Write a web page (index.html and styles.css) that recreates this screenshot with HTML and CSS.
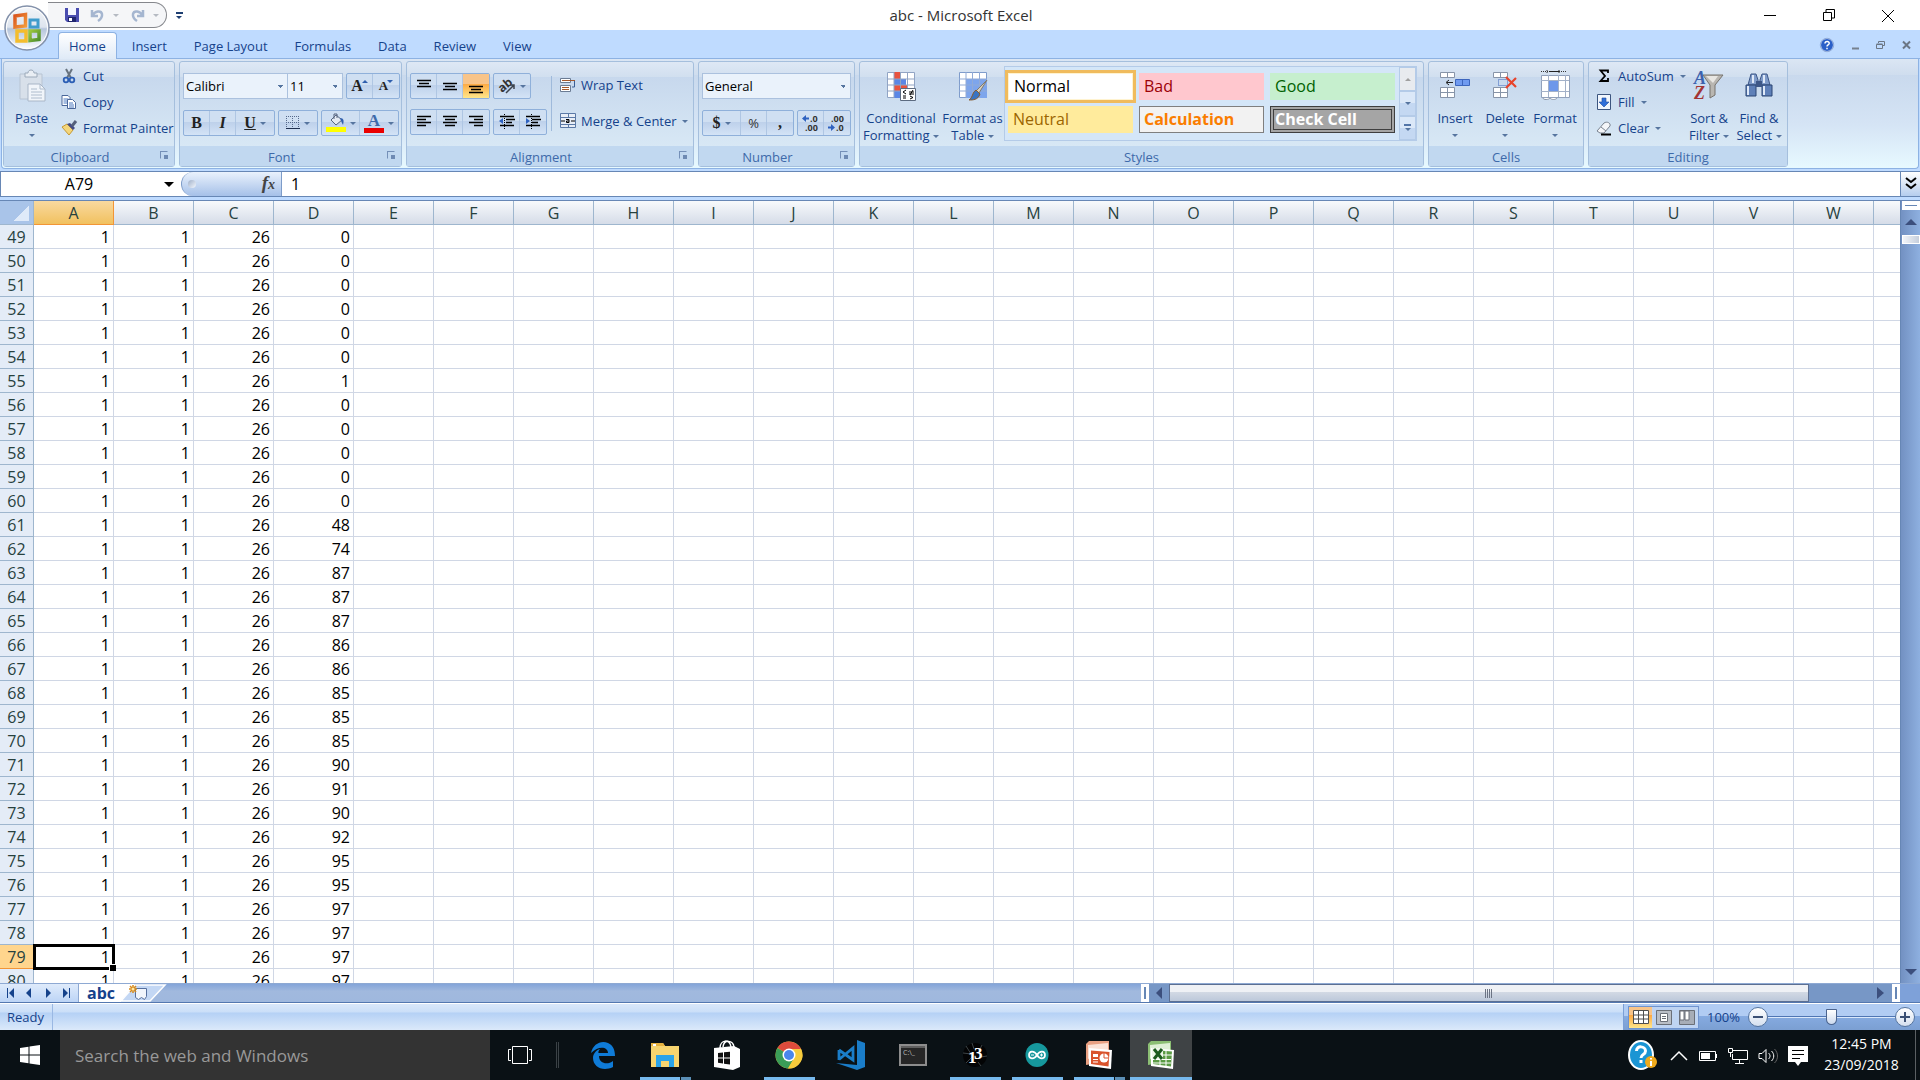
FILE: index.html
```html
<!DOCTYPE html>
<html lang="en">
<head>
    <meta charset="UTF-8">
    <meta name="viewport" content="width=device-width, initial-scale=1.0">
    <title>abc - Microsoft Excel</title>
    <link rel="stylesheet" href="styles.css">
</head>
<body>
    <!-- Title bar -->
    <header class="title-bar">
        <button class="office-button" aria-label="Office Button">
            <svg width="46" height="46" viewBox="0 0 46 46">
                <defs>
                    <linearGradient id="orb" x1="0" y1="0" x2="0" y2="1">
                        <stop offset="0" stop-color="#f4f6f9"/><stop offset=".48" stop-color="#dde4ee"/>
                        <stop offset=".52" stop-color="#b5c5dc"/><stop offset="1" stop-color="#fff"/>
                    </linearGradient>
                    <linearGradient id="red" x1="0" y1="0" x2="1" y2="1"><stop offset="0" stop-color="#d9541e"/><stop offset="1" stop-color="#f39b3a"/></linearGradient>
                    <linearGradient id="green" x1="0" y1="0" x2="1" y2="1"><stop offset="0" stop-color="#9cc63c"/><stop offset="1" stop-color="#4d8f2c"/></linearGradient>
                </defs>
                <circle cx="23" cy="23" r="22" fill="url(#orb)" stroke="#8492ab" stroke-width="1.5"/>
                <circle cx="23" cy="23" r="20.5" fill="none" stroke="#fff"/>
                <path d="M11 11l10.500-1.500v11.500l-10.500 1z" fill="none" stroke="url(#red)" stroke-width="3.500"/>
                <path d="M26 15h8v7h-8z" fill="none" stroke="#3f9ccc" stroke-width="3"/>
                <path d="M13 26h9v10h-9z" fill="none" stroke="#f4bd2c" stroke-width="3.500"/>
                <path d="M26 26h9v8.500l-9 1z" fill="none" stroke="url(#green)" stroke-width="3.500"/>
            </svg>
        </button>
        <div class="quick-access">
            <button aria-label="Save"><svg width="14" height="14" viewBox="0 0 14 14"><path d="M0 0h14v14H2l-2-2z" fill="#4a4db0"/><path d="M3 0h8v7H3z" fill="#f4f6ff"/><path d="M3 9h8v5H3z" fill="#20266f"/><path d="M4 10h3v3H4z" fill="#fff"/></svg></button>
            <button aria-label="Undo"><svg width="13" height="13" viewBox="0 0 13 13"><path d="M1 1v6h6M1.500 6.500C4 2 10 1 11 5c.5 3-1 5-4 7" fill="none" stroke="#a5b6d0" stroke-width="2.500"/></svg></button>
            <span class="arrow grey"></span>
            <button aria-label="Redo"><svg width="13" height="13" viewBox="0 0 13 13"><path d="M12 1v6H6M11.500 6.500C9 2 3 1 2 5c-.5 3 1 5 4 7" fill="none" stroke="#a5b6d0" stroke-width="2.500"/></svg></button>
            <span class="arrow grey"></span>
        </div>
        <button class="customize" aria-label="Customize Quick Access Toolbar"><span class="bar"></span><span class="arrow navy"></span></button>
        <h1>abc - Microsoft Excel</h1>
        <div class="window-buttons">
            <button aria-label="Minimize"><svg width="14" height="14"><path d="M1 7.500h12" stroke="#000"/></svg></button>
            <button aria-label="Restore"><svg width="14" height="14" fill="none" stroke="#000"><path d="M1.500 4.500h8v8h-8zM4 4V1.500h8.500V10H10"/></svg></button>
            <button aria-label="Close"><svg width="14" height="14" stroke="#000"><path d="M1 2l12 12M13 2L1 14"/></svg></button>
        </div>
    </header>

    <!-- Ribbon tabs -->
    <nav class="tabs">
        <a href="#" class="tab active">Home</a>
        <a href="#" class="tab">Insert</a>
        <a href="#" class="tab">Page Layout</a>
        <a href="#" class="tab">Formulas</a>
        <a href="#" class="tab">Data</a>
        <a href="#" class="tab">Review</a>
        <a href="#" class="tab">View</a>
        <div class="doc-buttons">
            <button aria-label="Help"><svg width="14" height="14"><circle cx="7" cy="7" r="6.500" fill="#2a5fc8" stroke="#fff"/><circle cx="7" cy="7" r="6.700" fill="none" stroke="#4a74bd" stroke-width=".6"/><path d="M5 5.500c0-3 4.500-2.500 4.200 0C9 7 7 6.800 7 8.500M7 9.800v1.500" fill="none" stroke="#fff" stroke-width="1.500"/></svg></button>
            <button aria-label="Minimize workbook"><svg width="10" height="10"><path d="M2 8.500h7" stroke="#76818f" stroke-width="2"/></svg></button>
            <button aria-label="Restore workbook"><svg width="10" height="10" fill="none" stroke="#6b7685"><path d="M.5 4.500h6v4h-6zM.5 4h6M2.500 3V1.500h6v4H7"/></svg></button>
            <button aria-label="Close workbook"><svg width="10" height="10"><path d="M1 1.500l7 7M8 1.500l-7 7" stroke="#6b7685" stroke-width="2"/></svg></button>
        </div>
    </nav>

    <!-- Ribbon -->
    <section class="ribbon">
        <div class="group clipboard">
            <div class="group-body">
                <button class="big">
                    <svg width="30" height="32" viewBox="0 0 30 32"><path d="M3 4h22v25H3z" fill="#d8e0ea" stroke="#b8c4d3"/><path d="M8 3h3c0-4 6-4 6 0h3v4H8z" fill="#e9eef4" stroke="#9caaba"/><path d="M11 14h12l5 5v12H11z" fill="#f1f5fa" stroke="#a9b6c7"/><path d="M23 14v5h5M14 19h6M14 22h11M14 25h11M14 28h11" fill="none" stroke="#aebccd"/></svg>
                    <span>Paste</span><span class="arrow"></span>
                </button>
                <div class="stack">
                    <button class="small"><svg width="16" height="16" viewBox="0 0 16 16" fill="none"><path d="M5 1l5 9M11 1l-5 9" stroke="#68737f" stroke-width="2"/><circle cx="5" cy="12" r="2.300" stroke="#2c5fb5" stroke-width="1.800"/><circle cx="11" cy="12" r="2.300" stroke="#2c5fb5" stroke-width="1.800"/></svg>Cut</button>
                    <button class="small"><svg width="16" height="16" viewBox="0 0 16 16"><path d="M1 1.500h6l2 2v8H1z" fill="#fff" stroke="#4a679a"/><path d="M2.500 5h5M2.500 7h5M2.500 9h5" stroke="#4a78c0"/><path d="M6.500 5.500h5l3 3v6h-8z" fill="#fff" stroke="#4a679a"/><path d="M8 9h4M8 11h5M8 13h5" stroke="#4a78c0"/></svg>Copy</button>
                    <button class="small"><svg width="16" height="16" viewBox="0 0 16 16"><path d="M1 7l5-3 6 6-4 5z" fill="#f4d67b" stroke="#c69a35"/><path d="M6 4l6 6 2-2-5-5z" fill="#444b86"/><path d="M11 6l4-5" stroke="#55607c" stroke-width="3"/></svg>Format Painter</button>
                </div>
            </div>
            <div class="group-label">Clipboard<i class="launcher"></i></div>
        </div>

        <div class="group font">
            <div class="group-body rows">
                <div class="row">
                    <div class="joined">
                        <select class="font-name" aria-label="Font"><option>Calibri</option></select>
                        <select class="font-size" aria-label="Font Size"><option>11</option></select>
                    </div>
                    <div class="buttons">
                        <button class="serif" aria-label="Grow Font">A<sup class="up"></sup></button>
                        <button class="serif less" aria-label="Shrink Font">A<sup class="down"></sup></button>
                    </div>
                </div>
                <div class="row">
                    <div class="buttons">
                        <button class="serif">B</button>
                        <button class="serif"><em>I</em></button>
                        <button class="serif wide"><u>U</u><span class="arrow"></span></button>
                    </div>
                    <div class="buttons">
                        <button class="wide" aria-label="Borders"><svg width="14" height="14"><path d="M0 .5h13M0 6.500h13M.5 0v13M6.500 0v13M12.500 0v13" stroke="#566a8c" stroke-dasharray="1 1"/><path d="M0 12.500h14" stroke="#1e2f4f"/></svg><span class="arrow"></span></button>
                    </div>
                    <div class="buttons">
                        <button class="wide" aria-label="Fill Color"><svg width="20" height="20"><path d="M5 7l5-5 6 5-6 5z" fill="#e4eaf3" stroke="#56657f"/><path d="M8 6V1h3v4" fill="none" stroke="#56657f"/><path d="M14 5c4 0 4 3 3 7l-2-4z" fill="#2f5fae"/><path d="M0 14h20v5H0z" fill="#ff0"/></svg><span class="arrow"></span></button>
                        <button class="wide font-color" aria-label="Font Color"><b>A</b><span class="arrow"></span></button>
                    </div>
                </div>
            </div>
            <div class="group-label">Font<i class="launcher"></i></div>
        </div>

        <div class="group alignment">
            <div class="group-body">
                <div class="rows align-left">
                    <div class="row">
                        <div class="buttons">
                            <button aria-label="Top Align"><svg width="16" height="16"><path d="M1 2.500h14M3 5.500h10M1 8.500h14" stroke="#000" stroke-width="1.500"/></svg></button>
                            <button aria-label="Middle Align"><svg width="16" height="16"><path d="M1 5.500h14M3 8.500h10M1 11.500h14" stroke="#000" stroke-width="1.500"/></svg></button>
                            <button class="pressed" aria-label="Bottom Align"><svg width="16" height="16"><path d="M1 8.500h14M3 11.500h10M1 14.500h14" stroke="#000" stroke-width="1.500"/></svg></button>
                        </div>
                        <div class="buttons">
                            <button class="wide" aria-label="Orientation"><svg width="17" height="16" fill="none"><text x="0" y="11" transform="rotate(-40 7 9)" font-size="12" font-weight="bold" fill="#333">ab</text><path d="M7 15l8-8M15 11V7h-4" stroke="#3d434c" stroke-width="1.500"/></svg><span class="arrow"></span></button>
                        </div>
                    </div>
                    <div class="row">
                        <div class="buttons">
                            <button aria-label="Align Left"><svg width="16" height="16"><path d="M1 2.500h14M1 5.500h9M1 8.500h14M1 11.500h9" stroke="#000" stroke-width="1.500"/></svg></button>
                            <button aria-label="Center"><svg width="16" height="16"><path d="M1 2.500h14M3 5.500h10M1 8.500h14M3 11.500h10" stroke="#000" stroke-width="1.500"/></svg></button>
                            <button aria-label="Align Right"><svg width="16" height="16"><path d="M1 2.500h14M6 5.500h9M1 8.500h14M6 11.500h9" stroke="#000" stroke-width="1.500"/></svg></button>
                        </div>
                        <div class="buttons">
                            <button aria-label="Decrease Indent"><svg width="16" height="16"><path d="M1 2.500h14M7 5.500h9M7 8.500h6M1 11.500h14" stroke="#000" stroke-width="1.500"/><path d="M5.500 0v16" stroke="#000" stroke-dasharray="1 1"/><path d="M0 7l4-3v6z" fill="#2f62c0"/></svg></button>
                            <button aria-label="Increase Indent"><svg width="16" height="16"><path d="M1 2.500h14M7 5.500h9M7 8.500h6M1 11.500h14" stroke="#000" stroke-width="1.500"/><path d="M6.500 0v16" stroke="#000" stroke-dasharray="1 1"/><path d="M5 7l-4-3v6z" fill="#2f62c0"/></svg></button>
                        </div>
                    </div>
                </div>
                <div class="align-right">
                    <button class="small"><svg width="16" height="16"><path d="M.5 1.500h10v4H.5zM.5 8.500h10v6H.5z" fill="#fff" stroke="#6b7c94"/><path d="M2 3.500h13M2 10.500h7M2 12.500h7" stroke="#a4582c"/><path d="M14.500 4v6H12" fill="none" stroke="#3a5d94"/></svg>Wrap Text</button>
                    <button class="small"><svg width="16" height="16"><path d="M.5.5h15v14H.5z" fill="#e8eef7" stroke="#5b79a6"/><path d="M1 4.500h14M1 11.500h14M8.500 0v4M8.500 12v3" stroke="#5b79a6"/><path d="M1 8h4M11 8h4" stroke="#000"/><path d="M6 6.500h3v3H6.500V8H9" fill="none" stroke="#000"/></svg>Merge &amp; Center<span class="arrow"></span></button>
                </div>
            </div>
            <div class="group-label">Alignment<i class="launcher"></i></div>
        </div>

        <div class="group number">
            <div class="group-body rows">
                <div class="row"><select class="number-format" aria-label="Number Format"><option>General</option></select></div>
                <div class="row">
                    <div class="buttons">
                        <button class="wide serif">$<span class="arrow"></span></button>
                        <button class="percent">%</button>
                        <button class="serif">,</button>
                    </div>
                    <div class="buttons decimals">
                        <button aria-label="Increase Decimal"><svg width="18" height="20"><path d="M0 5.500l4-3.500v2.500h3v2H4V9z" fill="#2f62c0"/><text x="8" y="9">.0</text><text x="3" y="18">.00</text></svg></button>
                        <button aria-label="Decrease Decimal"><svg width="18" height="20"><path d="M7 14.500L3 11v2.500H0v2h3V18z" fill="#2f62c0"/><text x="3" y="9">.00</text><text x="8" y="18">.0</text></svg></button>
                    </div>
                </div>
            </div>
            <div class="group-label">Number<i class="launcher"></i></div>
        </div>

        <div class="group styles">
            <div class="group-body">
                <button class="big cond">
                    <svg width="30" height="32" viewBox="0 0 30 32"><path d="M1.500 2.500h27v25h-27z" fill="#fff" stroke="#91a4c4"/><path d="M8 2h6v7H8z" fill="#e8533f"/><path d="M8 9h12v6H8z" fill="#5b87e6"/><path d="M8 15h13v6H8z" fill="#e8533f"/><path d="M8 21h6v7H8z" fill="#5b87e6"/><path d="M1 9h28M1 15h28M1 21h28M8 2v26M14.500 2v26M21.500 2v26" stroke="#91a4c4" fill="none"/><path d="M14.500 18.500h15v12h-15z" fill="#fff" stroke="#5c6b80"/><path d="M20 20l-3 2 3 2M17 26h3M17 28h3M23 22h5M23 24h5M27 20l-3 5M24 26l3 1.500-3 1.500" fill="none" stroke="#000"/></svg>
                    <span>Conditional</span><span>Formatting <span class="arrow"></span></span>
                </button>
                <button class="big table-style">
                    <svg width="30" height="32" viewBox="0 0 30 32"><path d="M1.500 2.500h27v25h-27z" fill="#fff" stroke="#7f9ccb"/><path d="M8 9h21v19H8z" fill="#7da5ec"/><path d="M1 9h28M1 15h28M1 21h28M8 2v26M14.500 2v26M21.500 2v26" stroke="#91aad6" fill="none"/><path d="M29 10l-8 13-3-2z" fill="#d8d0bf" stroke="#7f7a6f"/><path d="M18 20l4 4c-2 6-7 6-11 6 4-2 3-8 7-10z" fill="#3a74c2" stroke="#8a5c2c"/></svg>
                    <span>Format as</span><span>Table <span class="arrow"></span></span>
                </button>
                <div class="gallery">
                    <div class="gallery-items">
                        <button class="style-item normal">Normal</button>
                        <button class="style-item bad">Bad</button>
                        <button class="style-item good">Good</button>
                        <button class="style-item neutral">Neutral</button>
                        <button class="style-item calculation">Calculation</button>
                        <button class="style-item check">Check Cell</button>
                    </div>
                    <div class="gallery-scroll">
                        <button class="off" aria-label="Previous row"><span class="arrow flip"></span></button>
                        <button aria-label="Next row"><span class="arrow"></span></button>
                        <button aria-label="More"><span class="bar"></span><span class="arrow"></span></button>
                    </div>
                </div>
            </div>
            <div class="group-label">Styles</div>
        </div>

        <div class="group cells">
            <div class="group-body">
                <button class="big">
                    <svg width="32" height="32" viewBox="0 0 32 32"><path d="M1.500 2.500h14v5h-14zM8.500 2v5M1.500 17.500h14v10h-14zM8.500 17v10M1 22.500h14" fill="#fff" stroke="#8794a8"/><path d="M16.500 9.500h14v6h-14zM23.500 9v6" fill="#6f9af0" stroke="#3c65bd"/><path d="M8 12.500h6M10 10l-3 2.500 3 2.500" fill="none" stroke="#222"/></svg>
                    <span>Insert</span><span class="arrow"></span>
                </button>
                <button class="big">
                    <svg width="32" height="32" viewBox="0 0 32 32"><path d="M4.500 2.500h14v5h-14zM11.500 2v5M4.500 17.500h14v10h-14zM11.500 17v10M4 22.500h14" fill="#fff" stroke="#8794a8"/><path d="M9.500 9.500h9v6h-9z" fill="none" stroke="#3c65bd" stroke-dasharray="1 1"/><path d="M17 7l10 10M27 8L17 18" stroke="#e8432a" stroke-width="2.200"/></svg>
                    <span>Delete</span><span class="arrow"></span>
                </button>
                <button class="big">
                    <svg width="32" height="32" viewBox="0 0 32 32"><path d="M2.500 5.500h28v22h-28z" fill="#fff" stroke="#91a1bb"/><path d="M10 11h9v10h-9z" fill="#6d97ea"/><path d="M2 10.500h28M2 21.500h28M9.500 5v22M19.500 5v22M26.500 5v22" stroke="#a3b1c8"/><path d="M2 1.500h26M8 0v4M20 0v4" stroke="#333" stroke-dasharray="1 1"/><path d="M10 1.500h10" stroke="#222"/><path d="M4 28c0 2 6 2 7 0 1 2 6 2 7 0" fill="#fff" stroke="#8794a8"/></svg>
                    <span>Format</span><span class="arrow"></span>
                </button>
            </div>
            <div class="group-label">Cells</div>
        </div>

        <div class="group editing">
            <div class="group-body">
                <div class="stack">
                    <button class="small"><svg width="16" height="16"><path d="M12 5V2.500H4.500L9 8l-4.500 5H12v-3" fill="none" stroke="#000" stroke-width="1.800"/></svg>AutoSum<span class="arrow"></span></button>
                    <button class="small"><svg width="16" height="16"><path d="M1.500.5h13v15h-13z" fill="#f1f6fd" stroke="#3c557f"/><path d="M6 4h4v4h3l-5 5-5-5h3z" fill="#2f6fd9" stroke="#1e4a9c" stroke-width=".6"/></svg>Fill<span class="arrow"></span></button>
                    <button class="small"><svg width="16" height="16"><path d="M1 11l7-8c3-2 7 0 6 3l-6 7H4z" fill="#f4f6f9" stroke="#79828f"/><path d="M5 7l5 4" stroke="#79828f"/><path d="M5 14.500h10" stroke="#000" stroke-width="2"/></svg>Clear<span class="arrow"></span></button>
                </div>
                <button class="big">
                    <svg class="sort-icon" width="30" height="32" viewBox="0 0 30 32"><text x="0" y="14" fill="#3c62ad">A</text><path d="M9 5h20l-8 10v10l-5 3V15z" fill="#b9b6b1" stroke="#77736d"/><path d="M12 6h12l-5 7z" fill="#e8e6e2"/><text x="0" y="29" fill="#a23434">Z</text></svg>
                    <span>Sort &amp;</span><span>Filter <span class="arrow"></span></span>
                </button>
                <button class="big">
                    <svg width="30" height="32" viewBox="0 0 30 32"><path d="M7 4h5l2 6v5H4zM18 4h5l3 11H16v-5z" fill="#7f9bc9" stroke="#3d5787"/><path d="M2 15h10v11H2zM18 15h10v11H18z" fill="#5f80b8" stroke="#2b4472"/><path d="M4 16v9M20 16v9M9 5v8M20 5v8" stroke="#dfe9f8" stroke-width="2"/><path d="M12 11h6v6h-6z" fill="#3d5787"/></svg>
                    <span>Find &amp;</span><span>Select <span class="arrow"></span></span>
                </button>
            </div>
            <div class="group-label">Editing</div>
        </div>
    </section>

    <!-- Formula bar -->
    <div class="formula-bar">
        <input type="text" class="name-box" value="A79" aria-label="Name Box">
        <button class="name-arrow" aria-label="Names"><span class="arrow black"></span></button>
        <div class="fx-pill"><span class="dot"></span><button class="fx" aria-label="Insert Function">f<span>x</span></button></div>
        <input type="text" class="formula" value="1" aria-label="Formula">
        <button class="expand" aria-label="Expand Formula Bar"><svg width="12" height="14"><path d="M1 1l5 4 5-4M1 7l5 4 5-4" fill="none" stroke="#000" stroke-width="2"/></svg></button>
    </div>

    <!-- Worksheet -->
    <main class="workspace">
        <div class="sheet">
            <table class="grid">
                <thead><tr id="columns"><th class="corner"></th></tr></thead>
                <tbody id="rows"></tbody>
            </table>
        </div>
        <div class="v-scroll">
            <span class="split-h"></span>
            <span class="arrow scroll-arrow flip"></span>
            <span class="v-thumb"></span>
            <span class="arrow scroll-arrow last"></span>
        </div>
    </main>

    <!-- Sheet tabs and horizontal scrollbar -->
    <div class="sheet-bar">
        <div class="sheet-nav">
            <button aria-label="First sheet"><svg width="10" height="10"><path d="M1 0h1v10H1zM8 0v10L3 5z"/></svg></button>
            <button aria-label="Previous sheet"><svg width="10" height="10"><path d="M7 0v10L2 5z"/></svg></button>
            <button aria-label="Next sheet"><svg width="10" height="10"><path d="M3 0v10l5-5z"/></svg></button>
            <button aria-label="Last sheet"><svg width="10" height="10"><path d="M2 0v10l5-5zM8 0h1v10H8z"/></svg></button>
        </div>
        <button class="sheet-tab">abc</button>
        <button class="new-sheet" aria-label="Insert Worksheet">
            <svg width="46" height="18" viewBox="0 0 46 18"><path d="M0 0h14L0 17z" fill="#fff"/><path d="M0 17L14 1h30L29 17z" fill="#c3d7f4"/><path d="M0 17L14 1h30L29 17z" stroke="#fff" fill="none" stroke-width="1.500"/><path d="M14.500 4.500h11v8l-2 3-3-2-3 2-3-2z" fill="#f1f5fc" stroke="#56709f"/><path d="M12 1v8M8 5h8M9 2l6 6M15 2L9 8" stroke="#d88a1a" stroke-width="1.500"/><circle cx="12" cy="5" r="1.500" fill="#ffe9a8"/></svg>
        </button>
        <div class="h-scroll">
            <span class="split-v"></span>
            <svg width="20" height="18"><path d="M13 3v12l-6-6z" fill="#3c4f7d"/></svg>
            <span class="h-thumb"><svg width="9" height="9"><path d="M.5 0v9M2.500 0v9M4.500 0v9M6.500 0v9" stroke="#6c7484"/></svg></span>
            <span class="h-track"></span>
            <svg width="20" height="18"><path d="M5 3v12l7-6z" fill="#3c4f7d"/></svg>
            <span class="split-v"></span>
        </div>
        <div class="corner-box"></div>
    </div>

    <!-- Status bar -->
    <footer class="status-bar">
        <span class="ready">Ready</span>
        <div class="status-right">
            <div class="views">
                <button class="pressed" aria-label="Normal view"><svg width="16" height="15"><path d="M.5.500h15v13H.5z" fill="#fff" stroke="#4e4e4e"/><path d="M0 5h16M0 9h16M5.500 0v14M10.500 0v14" stroke="#4e4e4e"/></svg></button>
                <button aria-label="Page Layout view"><svg width="16" height="15"><path d="M.5.500h15v14H.5z" fill="#b9bec6" stroke="#6a6f78"/><path d="M4.500 3.500h7v8h-7z" fill="#fff" stroke="#6a6f78"/><path d="M6 6.500h4M6 8.500h4" stroke="#6a6f78"/></svg></button>
                <button aria-label="Page Break view"><svg width="16" height="15"><path d="M.5.500h15v14H.5z" fill="#a7adb7" stroke="#6a6f78"/><path d="M1 1h4v9H1zM6 1h4v9H6z" fill="#fff" stroke="#6a6f78"/></svg></button>
            </div>
            <span class="zoom-level">100%</span>
            <button class="zoom-button" aria-label="Zoom Out"><svg width="12" height="12"><path d="M1 6h10" stroke="#3a4f74" stroke-width="2"/></svg></button>
            <input type="range" class="zoom-slider" min="0" max="100" value="50" aria-label="Zoom">
            <button class="zoom-button" aria-label="Zoom In"><svg width="12" height="12"><path d="M1 6h10M6 1v10" stroke="#3a4f74" stroke-width="2"/></svg></button>
        </div>
    </footer>

    <!-- Windows taskbar -->
    <div class="taskbar">
        <button class="start" aria-label="Start"><svg width="20" height="20" fill="#fff"><path d="M0 3l8.500-1.200v7.700H0zM9.500 1.600L20 0v9.500H9.500zM0 10.500h8.500v7.700L0 17zM9.500 10.500H20V20L9.500 18.400z"/></svg></button>
        <input type="text" class="search" placeholder="Search the web and Windows" aria-label="Search">
        <button class="task-view" aria-label="Task View"><svg width="24" height="20" fill="none" stroke="#fff"><path d="M4.500 1.500h15v17h-15zM3 4.500H.5v11H3M21 4.500h2.500v11H21"/></svg></button>
        <span class="divider"></span>
        <button class="app" aria-label="Edge"><svg width="28" height="28" viewBox="0 0 28 28"><path d="M2 12C4 3 12-1 19 2c5 2 7 7 7 13H10c0 8 9 9 14 5v6C14 31 4 26 4 17c0-4 3-8 7-9-1 1-2 3-1.500 4H19c0-6-9-8-17 0z" fill="#0f7bd7"/></svg></button>
        <button class="app open more" aria-label="File Explorer"><svg width="28" height="28" viewBox="0 0 28 28"><path d="M0 2h12l2 3h14v21H0z" fill="#f7d56f"/><path d="M0 2h12l2 3H0z" fill="#e6b23f"/><path d="M2 3h3v2H2z" fill="#fff"/><path d="M5 26V14h18v12h-5v-6h-8v6z" fill="#2aa3e8"/></svg></button>
        <button class="app" aria-label="Store"><svg width="28" height="30" viewBox="0 0 28 30"><path d="M1 8l20-2 6 3v18l-7 3-19-3z" fill="#fff"/><path d="M7 8c0-8 10-10 11-1M10 7c1-8 10-7 11 0" fill="none" stroke="#fff" stroke-width="1.500"/><path d="M5 13l5-.5v5H5zM11 12.300l6-.6v5.800h-6zM5 18.500h5v5l-5-.7zM11 18.500h6v6l-6-.8z" fill="#111"/></svg></button>
        <button class="app open" aria-label="Chrome"><svg width="28" height="28" viewBox="0 0 28 28"><circle cx="14" cy="14" r="13.500" fill="#f6cb3c"/><path d="M14 14L2.500 7A13.500 13.500 0 0 1 26 8H14z" fill="#de4b3c"/><path d="M2.500 7A13.500 13.500 0 0 0 13 27.500L19 17l-5-3z" fill="#3a9d57"/><path d="M14 8H26a13.500 13.500 0 0 1-13 19.500L19.500 17z" fill="#f6cb3c"/><circle cx="14" cy="14" r="6.500" fill="#fff"/><circle cx="14" cy="14" r="5" fill="#4a86ec"/></svg></button>
        <button class="app" aria-label="Visual Studio Code"><svg width="30" height="30" viewBox="0 0 30 30"><path d="M21 0l8 3v24l-8 3L0 23l21 2z" fill="#1a7dc9"/><path d="M3 10v10M3 10l14 10V8L3 19.500" fill="none" stroke="#1a7dc9" stroke-width="2.800"/></svg></button>
        <button class="app" aria-label="Command Prompt"><svg width="28" height="22" viewBox="0 0 28 22"><path d="M1 1h26v20H1z" fill="#262626" stroke="#8d8d8d" stroke-width="2"/><path d="M2 2h24v2H2z" fill="#5f5f5f"/><text x="4" y="11" font-size="7" fill="#bbb">C:\_</text></svg></button>
        <button class="app open" aria-label="13"><svg class="ball" width="26" height="28" viewBox="0 0 26 28"><circle cx="13" cy="14" r="12" fill="#030405"/><path d="M1 12l8 1-5-8M10 2l2 6M20 4l-3 6M25 15l-6 1M4 22l6-6M19 25l-3-4" stroke="#3d4447" fill="none"/><text x="6" y="22">1</text><text x="12" y="18">3</text></svg></button>
        <button class="app open" aria-label="Arduino"><svg width="24" height="28" viewBox="0 0 24 28"><ellipse cx="12" cy="14" rx="11.500" ry="12" fill="#16989d"/><path d="M12 14c-3-5-8-4-8 0s5 5 8 0 8-4 8 0-5 5-8 0z" fill="none" stroke="#fff" stroke-width="1.700"/><path d="M6 14h3M15 14h3M16.500 12.500v3" stroke="#fff"/></svg></button>
        <button class="app open more" aria-label="PowerPoint"><svg width="28" height="28" viewBox="0 0 28 28"><path d="M1 3l3-3h20v20L1 24z" fill="#e9a183"/><path d="M3 4l20-2v8L3 18z" fill="#fbe2d6"/><path d="M4 7l23 2-1 19-22-3z" fill="#fff"/><path d="M6 9.500l18.500 1.500-1 14.500L6 23z" fill="#d9532c"/><circle cx="19" cy="17" r="4.500" fill="#fff"/><path d="M19 17v-5M19 17h5" stroke="#d9532c"/><path d="M8 13h5v3H8zM8 18h5v1H8zM8 20.500h5v1H8z" fill="#fff"/></svg></button>
        <button class="app open current" aria-label="Excel"><svg width="28" height="28" viewBox="0 0 28 28"><path d="M1 3l3-3h20v20L1 24z" fill="#8cbf74"/><path d="M3 4l20-2v8L3 18z" fill="#dff0d6"/><path d="M4 7l23 2-1 19-22-3z" fill="#fff"/><path d="M6 9l19 1.500-1 15L6 23z" fill="#5b9b45"/><path d="M6 18.500h18M6 22h18M13 10v14M19 10v15M14 14h11" stroke="#fff" fill="none"/><path d="M5 7h11v11H5z" fill="#eff7ea"/><path d="M7 8l8 10M15 8l-8 10" stroke="#1c5a1e" stroke-width="3"/></svg></button>
        <div class="tray">
            <svg class="tray-help" width="30" height="32"><ellipse cx="13" cy="15" rx="12" ry="14" fill="#1b95d4" stroke="#fff" stroke-width="2"/><path d="M8.500 11c0-6 9-5 9 0 0 4-4.500 3-4.500 7M13 20v3" fill="none" stroke="#fff" stroke-width="3"/><circle cx="23" cy="22" r="6" fill="#efaa1c"/><path d="M23 18v1.500M23 21v5" stroke="#fff" stroke-width="2"/></svg>
            <svg width="18" height="18" fill="none" stroke="#fff"><path d="M1 13l8-8 8 8" stroke-width="1.500"/></svg>
            <svg width="20" height="18"><path d="M1.500 4.500h16v9h-16zM18.500 7v4" fill="none" stroke="#fff"/><path d="M3 6h9v6H3z" fill="#fff"/></svg>
            <svg width="20" height="18" fill="none" stroke="#fff"><path d="M5 3.500h14.500v9H4.500V7M11.500 13v3M7 16.500h9M.5 1.500h4v4h-4zM2.500 6v4"/></svg>
            <svg width="20" height="18" fill="none" stroke="#fff"><path d="M1 6.500h3l4-4v13l-4-4H1zM10.500 6c2 2 2 4 0 6M13.500 4c3 3 3 7 0 10"/><path d="M16.500 2c4 4 4 10 0 14" stroke="#666"/></svg>
            <svg width="20" height="20"><path d="M0 0h20v16h-7l-3 4-3-4H0z" fill="#fff"/><path d="M4 4.500h12M4 8.500h12M4 12.500h8" stroke="#000"/></svg>
        </div>
        <div class="clock"><span>12:45 PM</span><span>23/09/2018</span></div>
        <span class="show-desktop"></span>
    </div>

    <script src="script.js"></script>
</body>
</html>
```
FILE: styles.css
```css
* {
    margin: 0;
    padding: 0;
    box-sizing: border-box;
}

body {
    display: flex;
    flex-direction: column;
    height: 100vh;
    overflow: hidden;
    background-color: #bfdbff;
    color: #15428b;
    font-family: 'Open Sans', 'Noto Sans', sans-serif;
    font-size: 13px;
    line-height: 18px;
}

button, input, select {
    border: none;
    background: none;
    color: inherit;
    font: inherit;
}

svg {
    display: block;
    flex: none;
    overflow: visible;
}

.arrow {
    display: inline-block;
    flex: none;
    border: 3px solid transparent;
    border-top-color: #56759f;
    border-bottom: 0;
    vertical-align: middle;
}

.arrow.flip {
    border-top: 0;
    border-bottom: 3px solid #a0a0a0;
}

.arrow.grey {
    border-top-color: #b5bac2;
}

.arrow.navy {
    border-top-color: #1e3f72;
}

.arrow.black {
    border-width: 5px;
    border-bottom-width: 0;
    border-top-color: #000;
}

.bar {
    display: block;
    width: 7px;
    height: 2px;
    background-color: #5375a8;
}

/* Title bar */
.title-bar {
    position: relative;
    display: flex;
    flex: none;
    height: 30px;
    background-color: #fff;
}

.office-button {
    position: absolute;
    z-index: 2;
    left: 4px;
    top: 5px;
    border-radius: 50%;
}

.quick-access {
    display: flex;
    align-items: center;
    gap: 12px;
    width: 119px;
    height: 26px;
    margin: 2px 0 0 48px;
    padding-left: 17px;
    border: 1px solid #85878c;
    border-left: none;
    border-radius: 0 13px 13px 0;
    background-color: #f5f6f8;
}

.quick-access .arrow {
    margin-left: -3px;
}

.customize {
    display: flex;
    flex-direction: column;
    align-items: center;
    justify-content: center;
    gap: 2px;
    width: 24px;
}

.customize .bar {
    background-color: #1e3f72;
}

h1 {
    flex: 1;
    padding-right: 32px;
    color: #333;
    font-size: 15px;
    font-weight: normal;
    line-height: 31px;
    text-align: center;
}

.window-buttons {
    display: flex;
    flex: none;
    gap: 45px;
    align-items: center;
    margin-right: 25px;
}

/* Ribbon tabs */
.tabs {
    display: flex;
    flex: none;
    gap: 3px;
    height: 29px;
    padding: 2px 8px 0 58px;
    border-bottom: 1px solid #8db2e3;
}

.tab {
    height: 27px;
    padding: 0 12px;
    color: #15428b;
    line-height: 28px;
    text-decoration: none;
}

.tab.active {
    border: 1px solid #8db2e3;
    border-bottom: none;
    border-radius: 4px 4px 0 0;
    background: linear-gradient(#fff, #dfeaf7);
    padding: 0 10px;
    line-height: 26px;
}

.doc-buttons {
    display: flex;
    align-items: center;
    gap: 16px;
    margin-left: auto;
}

/* Ribbon */
.ribbon {
    display: flex;
    flex: none;
    gap: 4px;
    height: 110px;
    margin: 0 1px;
    padding: 2px 1px;
    border: 1px solid #8db2e3;
    border-top: none;
    border-radius: 0 0 4px 4px;
    background: linear-gradient(#dbe6f4 0, #cfddee 16px, #c9d9ed 16px, #d5e4f5 60%, #e7f9ff);
}

.group {
    display: flex;
    flex: none;
    flex-direction: column;
    height: 106px;
    border: 1px solid #a5bfdd;
    border-radius: 3px;
    background: linear-gradient(#dee8f5 0, #d1dfef 15px, #c7d8ed 15px, #d8e8f5 85px);
}

.clipboard { width: 172px; }
.font { width: 223px; }
.alignment { width: 288px; }
.number { width: 157px; }
.styles { width: 565px; }
.cells { width: 156px; }
.editing { width: 200px; }

.group-body {
    display: flex;
    flex: none;
    height: 84px;
}

.group-label {
    position: relative;
    flex: none;
    height: 20px;
    padding: 1px 18px 0 0;
    background-color: #c1d8f0;
    color: #3e6aaa;
    line-height: 21px;
    text-align: center;
}

.styles .group-label,
.cells .group-label,
.editing .group-label {
    padding-right: 0;
}

.launcher {
    position: absolute;
    right: 6px;
    top: 5px;
    width: 8px;
    height: 8px;
    border: 1px solid #7590b8;
    border-right-color: transparent;
    border-bottom-color: transparent;
    background: linear-gradient(#6e8ab3, #6e8ab3) 3px 3px / 4px 4px no-repeat;
}

.big {
    display: flex;
    flex-direction: column;
    align-items: center;
    width: 50px;
    padding-top: 8px;
    line-height: 17px;
    white-space: nowrap;
}

.big svg {
    margin-bottom: 8px;
}

.big > .arrow {
    margin-top: 7px;
}

.clipboard .big {
    width: 55px;
}

.stack {
    display: flex;
    flex-direction: column;
    gap: 8px;
    padding: 5px 0 0 2px;
}

.small {
    display: flex;
    align-items: center;
    gap: 6px;
    height: 18px;
    white-space: nowrap;
}

.rows {
    display: flex;
    flex-direction: column;
    gap: 11px;
    padding: 11px 3px 0;
}

.row {
    display: flex;
    gap: 3px;
}

.joined {
    display: flex;
}

select {
    height: 26px;
    padding: 0 2px;
    border: 1px solid #abc1de;
    appearance: none;
    background:
        conic-gradient(from -45deg at 50% 100%, #56759f 90deg, transparent 0) right 4px center / 6px 3px no-repeat,
        #eaf2fb;
    color: #000;
}

.font-name { width: 105px; }
.font-size { width: 55px; border-left: none; }
.number-format { width: 149px; }

.buttons {
    display: flex;
    height: 26px;
    border: 1px solid #8fb0da;
    border-radius: 2px;
    background: linear-gradient(#cfdff2 45%, #bdd0ea 45%, #d3e3f6);
}

.buttons button {
    display: flex;
    align-items: center;
    justify-content: center;
    gap: 4px;
    width: 26px;
    border-right: 1px solid #afc6e3;
}

.buttons button:last-child {
    border-right: none;
}

.buttons .wide {
    width: 38px;
}

.alignment .buttons .wide {
    width: 36px;
}

.pressed {
    background: linear-gradient(#f8c489 40%, #fda942 40%, #ffe68a);
}

.serif {
    color: #222;
    font-family: 'Liberation Serif', serif;
    font-size: 16px;
    font-weight: bold;
}

.less {
    font-size: 13px;
}

.serif sup {
    align-self: flex-start;
    margin: 6px 0 0 -5px;
    border: 3px solid transparent;
}

.serif .up {
    border-top: 0;
    border-bottom-color: #2f5fae;
}

.serif .down {
    border-bottom: 0;
    border-top-color: #2f5fae;
}

.font-color b {
    width: 20px;
    height: 20px;
    border-bottom: 5px solid #ea0000;
    color: #3e6aaa;
    font-family: 'Liberation Serif', serif;
    font-size: 17px;
    line-height: 16px;
}

.percent {
    color: #333;
}

.decimals text {
    fill: #333;
    font-size: 9px;
    font-weight: bold;
}

.sort-icon text {
    font: italic bold 18px 'Liberation Serif', serif;
}

.align-left {
    gap: 10px;
    width: 144px;
    padding-right: 0;
}

.align-right {
    display: flex;
    flex-direction: column;
    gap: 18px;
    height: 55px;
    margin-top: 14px;
    padding-left: 8px;
    border-left: 1px solid #9fbadb;
}

.align-right .small {
    gap: 5px;
}

.cond {
    width: 82px;
}

.table-style {
    width: 61px;
}

.gallery {
    display: flex;
    height: 75px;
    margin: 4px 0 0 1px;
    border: 1px solid #b4cbe8;
    background-color: #d4e6f8;
}

.gallery-items {
    display: grid;
    grid-template-columns: repeat(3, 125px);
    grid-auto-rows: 27px;
    gap: 6px;
    padding: 6px 4px 6px 3px;
}

.style-item {
    padding: 0 5px;
    color: #000;
    font-size: 16px;
    line-height: 25px;
    text-align: left;
}

.normal {
    border: 1px solid #fff3d0;
    outline: 3px solid #f0bb5d;
    background-color: #fff;
}

.bad { background-color: #ffc7ce; color: #9c0006; }
.good { background-color: #c6efce; color: #006100; }
.neutral { background-color: #ffeb9c; color: #9c6500; }

.calculation {
    padding: 0 4px;
    border: 1px solid #7f7f7f;
    background-color: #f2f2f2;
    color: #fa7d00;
    font-weight: bold;
}

.check {
    padding: 0 1px;
    border: 4px double #3f3f3f;
    background-color: #a5a5a5;
    color: #fff;
    font-weight: bold;
    line-height: 19px;
}

.gallery-scroll {
    display: flex;
    flex-direction: column;
    width: 17px;
}

.gallery-scroll button {
    display: flex;
    flex: 1;
    flex-direction: column;
    align-items: center;
    justify-content: center;
    gap: 2px;
    border: 1px solid #b4cbe8;
    background: linear-gradient(#dbe8f8 50%, #c4d8f2 50%);
}

.gallery-scroll .off {
    background: #e8ebef;
}

.cells .group-body {
    padding-left: 1px;
}

.editing .stack {
    width: 95px;
    padding-left: 7px;
}

/* Formula bar */
.formula-bar {
    display: flex;
    flex: none;
    height: 26px;
    margin-top: 2px;
    border: 1px solid #6787b5;
    border-right: none;
    background-color: #fff;
    color: #000;
    font-size: 16px;
}

.name-box {
    width: 156px;
    text-align: center;
}

.name-arrow {
    display: flex;
    align-items: center;
    justify-content: center;
    width: 24px;
}

.fx-pill {
    display: flex;
    align-items: center;
    justify-content: space-between;
    width: 101px;
    padding: 0 6px;
    border: 1px solid #7d9cc9;
    border-width: 0 1px;
    border-radius: 12px 0 0 12px;
    background: linear-gradient(#eaf2fd, #a5c0e8);
}

.dot {
    width: 8px;
    height: 8px;
    border-radius: 50%;
    background: linear-gradient(135deg, #9fb0c9, #f4f8fe);
}

.fx {
    color: #444;
    font: italic bold 19px/22px 'Liberation Serif', serif;
}

.fx span {
    font-size: 14px;
}

.formula {
    flex: 1;
    padding-left: 9px;
}

.expand {
    display: flex;
    align-items: center;
    justify-content: center;
    width: 20px;
    border-left: 1px solid #6787b5;
    background: linear-gradient(#fff, #b5cdee);
}

/* Worksheet */
.workspace {
    display: flex;
    flex: 1;
    min-height: 0;
    margin-top: 3px;
    border-top: 1px solid #6787b5;
}

.sheet {
    flex: 1;
    overflow: hidden;
    background-color: #fff;
}

.grid {
    width: 1954px;
    border-collapse: separate;
    border-spacing: 0;
    table-layout: fixed;
    color: #000;
    font-size: 16px;
}

.grid th {
    width: 80px;
    height: 24px;
    border-right: 1px solid #9eb6ce;
    border-bottom: 1px solid #9eb6ce;
    background: linear-gradient(#f8fafc, #d5dce8);
    color: #27413e;
    font-weight: normal;
    line-height: 22px;
}

.grid .corner {
    width: 34px;
    background: linear-gradient(135deg, transparent 50%, #dfeaf9 50%) 14px 5px / 15px 15px no-repeat, #a9c4e9;
}

.grid tbody th {
    width: 34px;
    background: #e4ecf7;
}

.grid thead .selected {
    border-color: #f29536;
    background: linear-gradient(#f9d99f, #f1c15f);
}

.grid tbody .selected {
    border-bottom-color: #f29536;
    background: #ffd58d;
}

.grid td {
    height: 24px;
    padding-right: 3px;
    border-right: 1px solid #d0d7e5;
    border-bottom: 1px solid #d0d7e5;
    line-height: 22px;
    text-align: right;
}

.grid .cursor {
    position: relative;
    outline: 3px solid #000;
    outline-offset: -2px;
}

.grid .cursor::after {
    content: '';
    position: absolute;
    right: -3px;
    bottom: -3px;
    width: 6px;
    height: 6px;
    border: 1px solid #fff;
    border-width: 1px 0 0 1px;
    background-color: #000;
}

.v-scroll {
    display: flex;
    flex-direction: column;
    align-items: center;
    width: 20px;
    border-left: 1px solid #6787b5;
    background: linear-gradient(90deg, #7391c2, #8eb0e0);
}

.split-h {
    width: 18px;
    height: 9px;
    border: 3px solid #fff;
    border-width: 4px 3px;
    background-color: #6787b5;
}

.scroll-arrow {
    border-width: 6px;
    border-bottom-width: 0;
    border-top-color: #3c4f7d;
}

.scroll-arrow.flip {
    margin: 9px 0 10px;
    border-width: 0 6px 6px;
    border-bottom-color: #3c4f7d;
}

.v-thumb {
    width: 18px;
    height: 9px;
    border: 1px solid #fff;
    background: linear-gradient(90deg, #f3f5f9, #c5cedc);
}

.last {
    margin: auto 0 8px;
}

/* Sheet tabs */
.sheet-bar {
    display: flex;
    flex: none;
    height: 20px;
    border-top: 1px solid #8ea9d3;
    border-bottom: 1px solid #5478b0;
    background: linear-gradient(#84a5d9, #a1b9de 40%, #9fb8de);
}

.sheet-nav {
    display: flex;
    align-items: center;
    justify-content: space-between;
    width: 79px;
    padding: 0 7px 0 6px;
    border-right: 1px solid #8ea9d3;
    background: linear-gradient(#dfebfb, #bcd4f6);
    fill: #15428b;
}

.sheet-tab {
    width: 42px;
    padding-left: 2px;
    background-color: #fff;
    font-size: 16px;
    font-weight: bold;
    line-height: 18px;
}

.new-sheet {
    width: 46px;
}

.h-scroll {
    display: flex;
    width: 759px;
    margin-left: auto;
    background-color: #7797c6;
}

.split-v {
    width: 8px;
    border: 3px solid #fff;
    background-color: #6787b5;
}

.h-thumb {
    display: flex;
    align-items: center;
    justify-content: center;
    flex: 1;
    border: 1px solid #5c6f92;
    background: linear-gradient(#eff1f5 45%, #d2d9e4 45%, #bcc8da);
}

.h-track {
    width: 63px;
}

.corner-box {
    width: 20px;
    background-color: #7ea1d9;
}

/* Status bar */
.status-bar {
    display: flex;
    flex: none;
    justify-content: space-between;
    height: 27px;
    border-top: 1px solid #fff;
    background: linear-gradient(#d9e7fa 0, #cbdff8 30%, #b5d1f5 35%, #dbe9fa);
}

.ready {
    width: 53px;
    padding-left: 7px;
    border-right: 1px solid #9ab8e3;
    line-height: 26px;
}

.status-right {
    display: flex;
    align-items: center;
    width: 297px;
    padding-left: 4px;
    border-left: 1px solid #7c9fd6;
    background: linear-gradient(#b1ccf3 45%, #86abe1 45%, #7b9fd2);
}

.views {
    display: flex;
    height: 23px;
    border: 1px solid #6f94cf;
    background-color: #bfd4f2;
}

.views button {
    display: flex;
    align-items: center;
    justify-content: center;
    width: 23px;
}

.zoom-level {
    width: 49px;
    text-align: center;
}

.zoom-button {
    display: flex;
    align-items: center;
    justify-content: center;
    width: 20px;
    height: 20px;
    border: 1px solid #56759f;
    border-radius: 50%;
    background: linear-gradient(#fff, #d4dfef);
}

.zoom-slider {
    width: 127px;
    height: 20px;
    appearance: none;
    background: linear-gradient(#4f76b4 50%, #dbe9fb 50%) center / 100% 2px no-repeat;
}

.zoom-slider::-webkit-slider-thumb {
    appearance: none;
    width: 11px;
    height: 16px;
    border: 1px solid #4b648e;
    border-radius: 1px 1px 6px 6px;
    background: linear-gradient(#fff, #cbd9ee);
}

/* Taskbar */
.taskbar {
    display: flex;
    flex: none;
    height: 50px;
    background-color: #0a1115;
    color: #fff;
}

.taskbar button {
    display: flex;
    align-items: center;
    justify-content: center;
}

.start {
    width: 60px;
}

.search {
    width: 430px;
    padding: 2px 15px 0;
    background-color: #333;
    font-size: 17px;
}

.search::placeholder {
    color: #999;
    opacity: 1;
}

.task-view {
    width: 60px;
}

.divider {
    width: 3px;
    height: 26px;
    margin: 12px 13px 12px 6px;
    border: 1px solid #3b4246;
    border-width: 0 1px;
}

.app {
    width: 62px;
    padding-top: 3px;
    border-bottom: 3px solid transparent;
}

.open {
    background: linear-gradient(#76b9ed, #76b9ed) center bottom / 51px 3px no-repeat border-box;
}

.more {
    background:
        linear-gradient(90deg, #76b9ed 40px, #0a1115 40px, #0a1115 41px, #5b8fb6 41px) center bottom / 51px 3px no-repeat border-box;
}

.current {
    border-bottom-color: #76b9ed;
    background: #3f4345;
}

.ball text {
    fill: #fff;
    font: bold 17px 'Liberation Serif', serif;
}

.tray {
    display: flex;
    align-items: center;
    gap: 10px;
    margin-left: auto;
    padding-top: 2px;
}

.tray-help {
    margin-right: 2px;
}

.clock {
    display: flex;
    flex-direction: column;
    width: 107px;
    padding-top: 3px;
    font-size: 14px;
    line-height: 21px;
    text-align: center;
}

.show-desktop {
    width: 5px;
    border-left: 1px solid #5b6063;
}
```
FILE: script.js
```js
const letters = 'ABCDEFGHIJKLMNOPQRSTUVW';
const firstRow = 49;
const currentRow = 79;

// Column D, one value per row
const values = [0, 0, 0, 0, 0, 0, 1, 0, 0, 0, 0, 0, 48, 74, 87, 87, 87, 86, 86, 85, 85, 85,
    90, 91, 90, 92, 95, 95, 97, 97, 97, 97];

// The last column is cut by the scrollbar and stays blank
const columns = document.getElementById('columns');
for (const letter of [...letters, '']) {
    const th = document.createElement('th');
    th.textContent = letter;
    if (letter === 'A') th.className = 'selected';
    columns.appendChild(th);
}

const body = document.getElementById('rows');
values.forEach((value, i) => {
    const tr = body.insertRow();
    const th = document.createElement('th');
    th.textContent = firstRow + i;
    tr.appendChild(th);
    const cells = [1, 1, 26, value];
    for (let c = 0; c <= letters.length; c++) {
        const td = tr.insertCell();
        if (c < cells.length) td.textContent = cells[c];
    }
    if (firstRow + i === currentRow) {
        th.className = 'selected';
        tr.cells[1].className = 'cursor';
    }
});
```
